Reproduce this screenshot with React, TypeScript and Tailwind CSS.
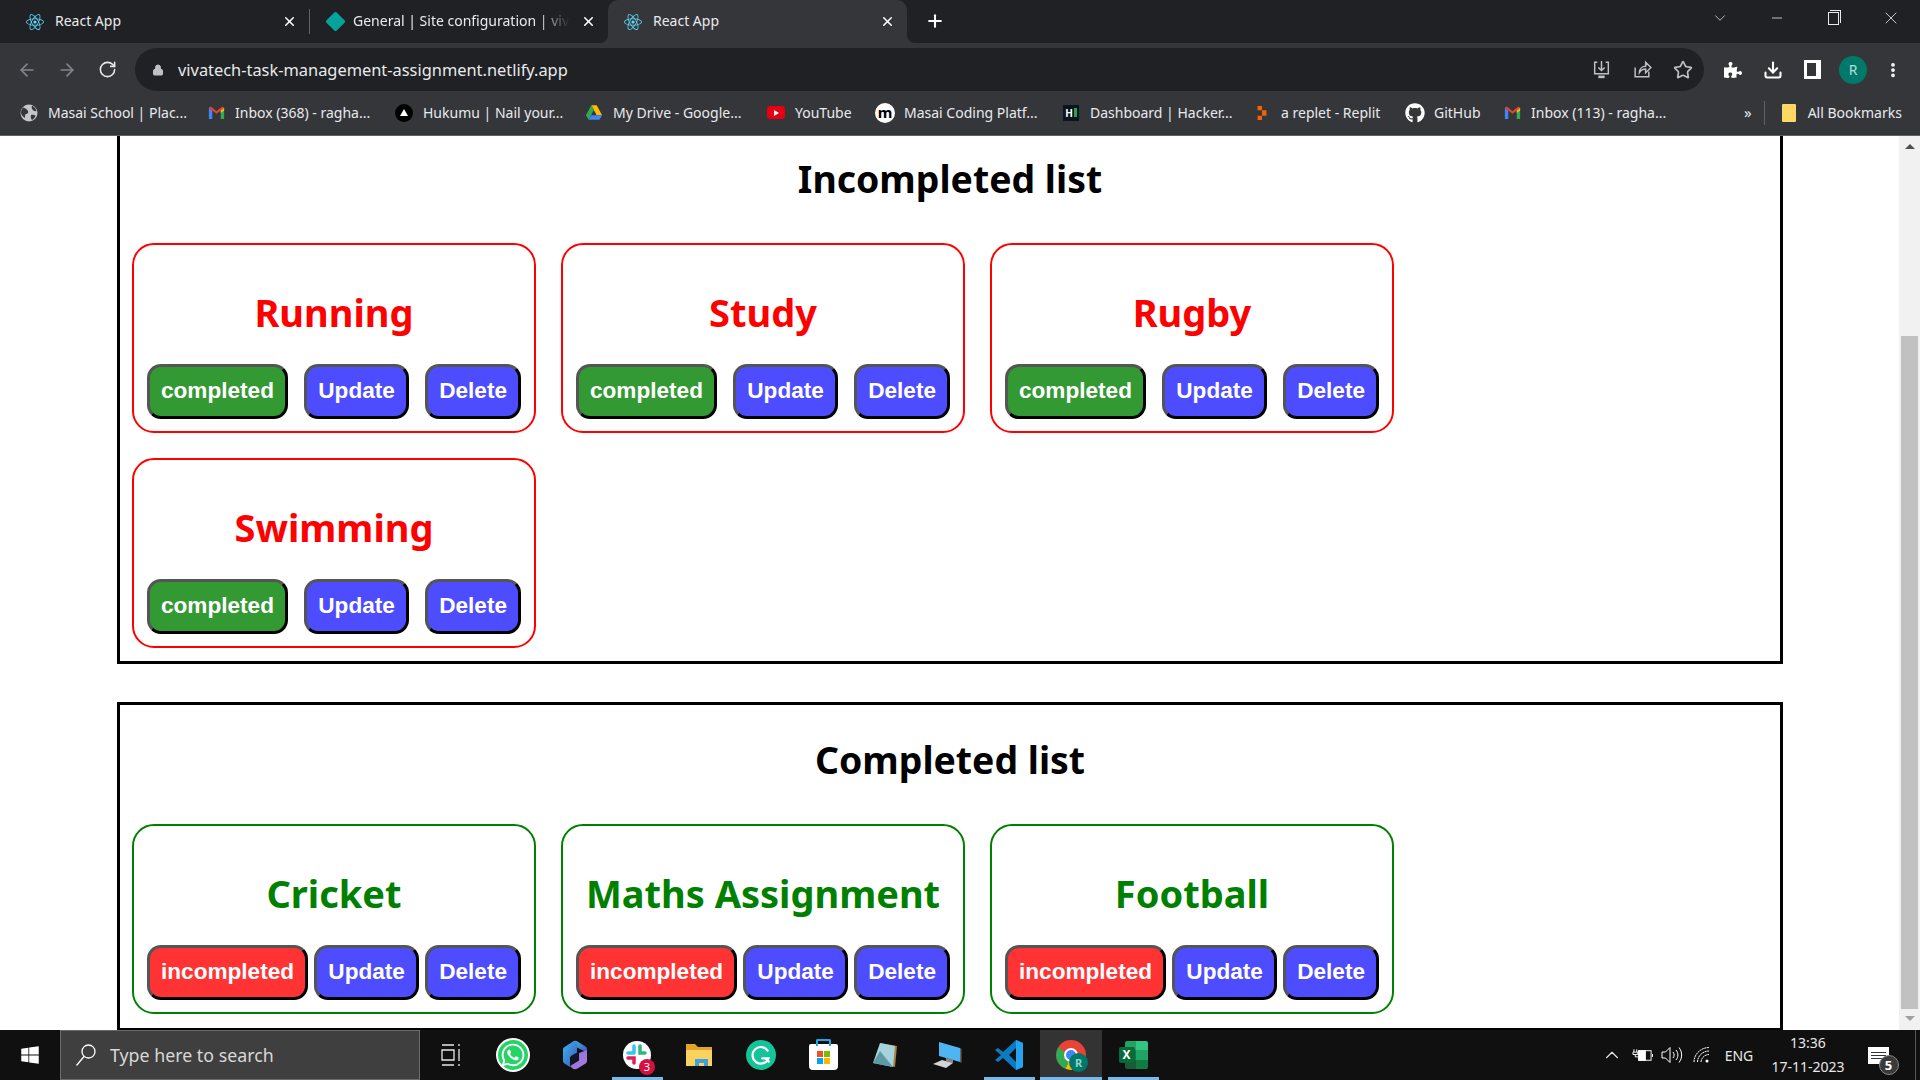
import { ArrowLeft, ArrowRight, ChevronDown, ChevronUp, Download, EllipsisVertical, Lock, Minus, Plus, RotateCw, Star, X } from "lucide-react"
import { FaGithub, FaPuzzlePiece, FaReact, FaWhatsapp, FaWindows } from "react-icons/fa"

const Gmail = () => (
    <svg viewBox="0 0 20 16" className="w-[17px] h-[14px]">
        <path d="M1 15V2l4 3v10z" fill="#4285f4" />
        <path d="M15 15V5l4-3v13z" fill="#34a853" />
        <path d="M1 2c1-1.500 2-1.500 3-1l6 5 6-5c1-.500 2-.500 3 1l-4 3-5 4-5-4z" fill="#ea4335" />
        <path d="M15 5l4-3v3l-4 3z" fill="#fbbc04" />
    </svg>
)

const Drive = () => (
    <svg viewBox="0 0 20 18" className="w-[18px] h-[17px]">
        <path d="M7 1h6l6 11h-6z" fill="#fbbc04" />
        <path d="M7 1L1 12l3 5 6-11z" fill="#34a853" />
        <path d="M4 17h12l3-5H7z" fill="#4285f4" />
    </svg>
)

const SiteGlobe = () => (
    <svg viewBox="0 0 18 18" className="w-[18px] h-[18px]">
        <circle cx="9" cy="9" r="8.500" fill="#c4c6c9" />
        <path d="M3 3.500c2 .500 4 1.500 5 3.500s-1 3-2 3-1 2-1 4c-2-1-4-3-4-5.500 0-2 1-4 2-5zM12 1.500c2 1 4 3 4.500 5.500-1.500.500-3 0-4-1.500s-1-2.500-.500-4zM11 11c1.500-.500 3-.500 4.500.500-.500 2-2 3.500-3.500 4.500-1-1-1.500-3-1-5z" fill="#35363a" />
    </svg>
)

const bookmarks = [
    { icon: <SiteGlobe />, label: "Masai School | Plac...", width: "w-[187px]" },
    { icon: <Gmail />, label: "Inbox (368) - ragha...", width: "w-[188px]" },
    { icon: <span className="w-[18px] h-[18px] rounded-full bg-black flex items-center justify-center"><span className="border-x-[4px] border-x-transparent border-b-[7px] border-b-white" /></span>, label: "Hukumu | Nail your...", width: "w-[190px]" },
    { icon: <Drive />, label: "My Drive - Google...", width: "w-[182px]" },
    { icon: <span className="w-[18px] h-[13px] rounded-[3px] bg-[#e60012] flex items-center justify-center"><span className="border-y-[3px] border-y-transparent border-l-[5px] border-l-white" /></span>, label: "YouTube", width: "w-[109px]" },
    { icon: <span className="w-[20px] h-[20px] rounded-full bg-white text-black text-[15px] leading-[18px] font-bold text-center">m</span>, label: "Masai Coding Platf...", width: "w-[186px]" },
    { icon: <span className="w-[16px] h-[16px] bg-[#0e141e] flex items-center justify-center gap-[1px] text-white text-[10px] leading-none font-bold">H<span className="w-[3px] h-[9px] bg-[#1ba94c]" /></span>, label: "Dashboard | Hacker...", width: "w-[191px]" },
    {
        icon: (
            <svg viewBox="0 0 12 18" className="w-[12px] h-[16px]">
                <path d="M1 1h5v5H1zM6 6h5v6H6zM1 12h5v5H1z" fill="#f26207" />
            </svg>
        ),
        label: "a replet - Replit",
        width: "w-[153px]",
    },
    { icon: <FaGithub size={20} className="text-white" />, label: "GitHub", width: "w-[97px]" },
    { icon: <Gmail />, label: "Inbox (113) - ragha...", width: "w-[180px]" },
]

const taskIcons = [
    { key: "view", underline: "" },
    { key: "whatsapp", underline: "" },
    { key: "copilot", underline: "" },
    { key: "slack", underline: "w-[51px]" },
    { key: "explorer", underline: "" },
    { key: "grammarly", underline: "" },
    { key: "store", underline: "" },
    { key: "notepad", underline: "" },
    { key: "pc", underline: "" },
    { key: "vscode", underline: "w-[51px]" },
    { key: "chrome", underline: "w-[62px]" },
    { key: "excel", underline: "w-[51px]" },
]

function TaskGlyph({ name }: { name: string }) {
    if (name === "view")
        return (
            <svg viewBox="0 0 20 26" className="w-[20px] h-[26px]" fill="none" stroke="#e8e8e8" strokeWidth="1.300">
                <path d="M1 3h12M1 23h12M1 8h12v10H1zM18 2v2M18 7v12M18 22v2" />
            </svg>
        )
    if (name === "whatsapp")
        return (
            <span className="w-[30px] h-[30px] rounded-full bg-[#25d366] flex items-center justify-center ring-2 ring-white">
                <FaWhatsapp size={26} className="text-white" />
            </span>
        )
    if (name === "copilot")
        return (
            <svg viewBox="0 0 26 30" className="w-[26px] h-[30px]">
                <defs>
                    <linearGradient id="copA" x1="0" y1="0" x2="1" y2="1">
                        <stop offset="0" stopColor="#38b6e8" />
                        <stop offset="1" stopColor="#3f56c4" />
                    </linearGradient>
                    <linearGradient id="copB" x1="0" y1="0" x2="1" y2="1">
                        <stop offset="0" stopColor="#7c6fe0" />
                        <stop offset="1" stopColor="#b67cdc" />
                    </linearGradient>
                </defs>
                <path d="M11 1.500c1.500-1 3-1 4.500 0l8 5c1 .700 1.500 1.500 1.500 3v3l-9-4.500-2-1z" fill="url(#copA)" />
                <path d="M2.500 7l8.500-5.500c2-1 4 .500 4 3V13l-7 4v10l-5.500-3.500C1.500 22.800 1 22 1 20.500v-11C1 8.500 1.500 7.600 2.500 7z" fill="url(#copA)" />
                <path d="M25 10v10.500c0 1.500-.500 2.300-1.500 3l-8 5c-2 1.200-4 1-5.500-.500L8 26l9-5.500V13z" fill="url(#copB)" />
                <path d="M9 16l7-4v8l-7 4.500z" fill="#101626" />
            </svg>
        )
    if (name === "slack")
        return (
            <span className="relative w-[28px] h-[28px] rounded-full bg-white">
                <svg viewBox="0 0 28 28" className="w-[28px] h-[28px]" fill="none" strokeWidth="3.500" strokeLinecap="round">
                    <path d="M11 5v7" stroke="#36c5f0" />
                    <path d="M5 12h5" stroke="#36c5f0" />
                    <path d="M17 5v7h5" stroke="#2eb67d" />
                    <path d="M5 17h6v5" stroke="#e01e5a" />
                </svg>
                <span className="absolute -right-[4px] -bottom-[6px] w-[16px] h-[16px] rounded-full bg-[#d4103f] text-white text-[11px] leading-[16px] text-center">3</span>
            </span>
        )
    if (name === "explorer")
        return (
            <svg viewBox="0 0 28 26" className="w-[28px] h-[26px]">
                <path d="M1 2h9l3 3h14v19H1z" fill="#e2a42b" />
                <path d="M1 8h26v16H1z" fill="#f9d25f" />
                <path d="M10 24v-7h13v7h-4v-3h-5v3z" fill="#3f9fe0" />
            </svg>
        )
    if (name === "grammarly")
        return (
            <span className="w-[30px] h-[30px] rounded-full bg-[#15c39a] flex items-center justify-center">
                <svg viewBox="0 0 20 20" className="w-[22px] h-[22px]" fill="none" stroke="white" strokeWidth="2" strokeLinecap="round">
                    <path d="M16 6a7.500 7.500 0 1 0 .800 7H11M14 13l3 3" />
                </svg>
            </span>
        )
    if (name === "store")
        return (
            <span className="relative w-[29px] h-[26px] mt-[4px] rounded-b-[4px] rounded-t-[2px] bg-white grid grid-cols-[6px_6px] grid-rows-[6px_6px] gap-[1px] content-center justify-center">
                <span className="bg-[#f25022]" />
                <span className="bg-[#7fba00]" />
                <span className="bg-[#00a4ef]" />
                <span className="bg-[#ffb900]" />
                <span className="absolute -top-[5px] left-[7px] w-[15px] h-[7px] border-2 border-b-0 border-[#1fa5e8] rounded-t-[2px]" />
            </span>
        )
    if (name === "notepad")
        return (
            <svg viewBox="0 0 28 28" className="w-[28px] h-[28px]">
                <path d="M9 2l17 3-2 21-4-1z" fill="#a9823f" />
                <path d="M9 2l15 3-2 21L2 22z" fill="#a7d3dc" />
                <path d="M2 22l7-12 13 16z" fill="#5f9aa8" />
            </svg>
        )
    if (name === "pc")
        return (
            <svg viewBox="0 0 30 28" className="w-[30px] h-[28px]">
                <path d="M7 1l21 6v14L7 15z" fill="#4fb4f2" />
                <path d="M28 7l1.500 1v14l-1.500-1z" fill="#666666" />
                <path d="M14 17l7 2v3l-7-2z" fill="#8a8a8a" />
                <path d="M1 23l9-4 11 3-7 5z" fill="#d4d4d4" />
            </svg>
        )
    if (name === "vscode")
        return (
            <svg viewBox="0 0 30 32" className="w-[30px] h-[32px]">
                <path d="M22 1l7 3v24l-7 3L9 19l-5 4-3-2 6-5-6-5 3-2 5 4z" fill="#0a7cc4" />
                <path d="M22 1l7 3v24l-7 3z" fill="#24a4ee" />
                <path d="M22 9l-7 7 7 7z" fill="#101010" />
            </svg>
        )
    if (name === "chrome")
        return (
            <span className="relative w-[30px] h-[30px] rounded-full bg-[conic-gradient(#ea4335_0deg_120deg,#fbbc04_120deg_200deg,#34a853_200deg_300deg,#ea4335_300deg)] flex items-center justify-center">
                <span className="w-[14px] h-[14px] rounded-full bg-[#4285f4] border-2 border-white" />
                <span className="absolute -right-[2px] -bottom-[2px] w-[19px] h-[19px] rounded-full bg-[#00796b] text-[#8fd6cb] text-[11px] font-bold leading-[19px] text-center">R</span>
            </span>
        )
    return (
        <span className="relative w-[29px] h-[28px]">
            <span className="absolute right-0 top-0 w-[23px] h-[28px] grid grid-cols-2 grid-rows-3 rounded-[2px] overflow-hidden">
                <span className="bg-[#21a366]" />
                <span className="bg-[#33c481]" />
                <span className="bg-[#107c41]" />
                <span className="bg-[#21a366]" />
                <span className="bg-[#185c37]" />
                <span className="bg-[#107c41]" />
            </span>
            <span className="absolute left-0 top-[6px] w-[16px] h-[16px] bg-[#0b6a38] rounded-[2px] text-white text-[12px] leading-[16px] font-bold text-center">X</span>
        </span>
    )
}

function Tab({ label, active, icon, fade }: { label: string; active?: boolean; icon: React.ReactNode; fade?: boolean }) {
    return (
        <div className={`relative w-[299px] h-[43px] flex items-center pl-[16px] pr-[12px] gap-[11px] ${active ? "bg-[#35363a] rounded-t-[10px]" : ""}`}>
            {active && (
                <>
                    <span className="absolute -left-[8px] bottom-0 w-[8px] h-[8px] bg-[#35363a]"><span className="block w-full h-full bg-[#202124] rounded-br-[8px]" /></span>
                    <span className="absolute -right-[8px] bottom-0 w-[8px] h-[8px] bg-[#35363a]"><span className="block w-full h-full bg-[#202124] rounded-bl-[8px]" /></span>
                </>
            )}
            {icon}
            <span className={`text-[14px] pb-[2px] whitespace-nowrap overflow-hidden text-[#e8eaed] ${fade ? "w-[218px] -ml-[2px] [mask-image:linear-gradient(to_right,black_85%,transparent)]" : ""}`}>{label}</span>
            <X size={15} strokeWidth={2.500} className="ml-auto shrink-0 text-white" />
        </div>
    )
}

function TaskCard({ title, done }: { title: string; done?: boolean }) {
    return (
        <div className={`w-[404px] h-[190px] border-2 rounded-[22px] pt-[40px] px-[13px] ${done ? "border-[#008000]" : "border-[#ff0000]"}`}>
            <h2 className={`h-[54px] mb-[25px] text-center text-[38px] leading-[54px] font-bold ${done ? "text-[#008000]" : "text-[#ff0000]"}`}>{title}</h2>
            <div className="flex justify-between font-['Liberation_Sans',sans-serif]">
                <Btn label={done ? "incompleted" : "completed"} color={done ? "bg-[#ff3333]" : "bg-[#339933]"} />
                <Btn label="Update" color="bg-[#4d4dff]" />
                <Btn label="Delete" color="bg-[#4d4dff]" />
            </div>
        </div>
    )
}

function Btn({ label, color }: { label: string; color: string }) {
    return (
        <button className={`h-[55px] px-[11px] pb-[2px] rounded-[14px] border-[3px] border-t-[#555555] border-l-[#555555] border-r-black border-b-black text-white font-bold text-[22.6px] ${color}`}>
            {label}
        </button>
    )
}

export default function App() {
    return (
        <div className="w-[1920px] h-[1080px] flex flex-col overflow-hidden bg-white font-['Noto_Sans',sans-serif]">
            {/* tab strip */}
            <div className="h-[43px] shrink-0 bg-[#202124] flex pl-[10px] text-[#e8eaed]">
                <Tab label="React App" icon={<FaReact size={18} className="shrink-0 text-[#61dafb]" />} />
                <div className="relative">
                    <span className="absolute left-0 top-[9px] h-[25px] w-px bg-[#5f6368]" />
                    <Tab
                        label="General | Site configuration | vivatech"
                        fade
                        icon={<span className="shrink-0 w-[17px] h-[17px] ml-[2px] rotate-45 scale-[.85] bg-[#05a39c] rounded-[2px]" />}
                    />
                </div>
                <Tab label="React App" active icon={<FaReact size={18} className="shrink-0 text-[#61dafb]" />} />
                <Plus size={20} strokeWidth={2.500} className="ml-[18px] mt-[11px] text-white" />
                <div className="ml-auto h-[36px] flex items-center text-[#e8eaed]">
                    <div className="w-[57px] flex justify-center"><ChevronDown size={18} strokeWidth={1} /></div>
                    <div className="w-[58px] flex justify-center"><Minus size={16} strokeWidth={1.200} /></div>
                    <div className="w-[57px] pr-[2px] flex justify-center">
                        <span className="relative w-[11px] h-[13px] border border-[#e8eaed] after:absolute after:left-[1px] after:-top-[3px] after:w-[11px] after:h-[13px] after:border-t after:border-r after:border-[#e8eaed]" />
                    </div>
                    <div className="w-[57px] pr-[1px] flex justify-center"><X size={20} strokeWidth={1} /></div>
                </div>
            </div>

            {/* toolbar */}
            <div className="h-[52px] shrink-0 bg-[#35363a] flex items-start pt-[5px] text-[#e8eaed]">
                <div className="w-[135px] h-[43px] flex items-center pl-[17px] gap-[20px]">
                    <ArrowLeft size={20} className="text-[#80868b]" />
                    <ArrowRight size={20} className="text-[#80868b]" />
                    <RotateCw size={19} className="text-[#e8eaed] ml-[1px]" />
                </div>
                <div className="w-[1569px] h-[43px] rounded-full bg-[#202124] flex items-center pl-[17px] pr-[11px]">
                    <Lock size={12} className="text-[#bdc1c6] fill-[#bdc1c6]" />
                    <span className="ml-[14px] pt-[1px] text-[16.4px] text-[#e8eaed]">vivatech-task-management-assignment.netlify.app</span>
                    <div className="ml-auto flex items-center gap-[20px] text-[#bdc1c6]">
                        <svg viewBox="0 0 20 20" className="w-[21px] h-[21px]" fill="none" stroke="currentColor" strokeWidth="1.400">
                            <path d="M6 3H3.500v11h13V3H14M10 2v9M7 8l3 3 3-3" />
                            <path d="M7 17h6" strokeWidth="2.500" />
                        </svg>
                        <svg viewBox="0 0 20 20" className="w-[21px] h-[21px]" fill="none" stroke="currentColor" strokeWidth="1.400">
                            <path d="M3 8v9h13v-5" />
                            <path d="M7 13c0-4 3-6 6-6V3l5 5-5 5V9.500c-2.500 0-4.500 1-6 3.500z" />
                        </svg>
                        <Star size={20} />
                    </div>
                </div>
                <div className="flex-1 h-[43px] flex items-center pl-[20px] gap-[21px]">
                    <FaPuzzlePiece size={18} className="text-white" />
                    <Download size={20} strokeWidth={2.500} className="text-white" />
                    <span className="w-[17px] h-[19px] border-[3px] border-r-[5px] border-white" />
                    <span className="w-[28px] h-[28px] -ml-[3px] rounded-full bg-[#00796b] text-[#b2dfdb] text-[14px] leading-[28px] text-center">R</span>
                    <EllipsisVertical size={18} strokeWidth={3} className="text-white -ml-[4px]" />
                </div>
            </div>

            {/* bookmarks */}
            <div className="h-[41px] shrink-0 bg-[#35363a] border-b border-[#5f6368] flex items-center pb-[5px] pl-[19px] text-[#e8eaed] text-[14px]">
                {bookmarks.map((b) => (
                    <div key={b.label + b.width} className={`${b.width} shrink-0 flex items-center`}>
                        <span className="w-[20px] shrink-0 flex justify-center">{b.icon}</span>
                        <span className="ml-[9px] whitespace-nowrap">{b.label}</span>
                    </div>
                ))}
                <span className="ml-[62px] text-[15px]">»</span>
                <span className="ml-[12px] w-px h-[24px] bg-[#5f6368]" />
                <span className="ml-[17px] w-[14px] h-[18px] bg-[#fdd663] rounded-[1px]" />
                <span className="ml-[12px] whitespace-nowrap">All Bookmarks</span>
            </div>

            {/* page */}
            <div className="flex-1 min-h-0 flex overflow-hidden">
                <main className="flex-1 pl-[117px]">
                    <section className="w-[1666px] border-[3px] border-t-0 border-black pt-[13px] pb-[13px] pl-[12px]">
                        <h1 className="h-[60px] mb-[34px] -ml-[12px] text-center text-[37.4px] leading-[60px] font-bold text-black">Incompleted list</h1>
                        <div className="grid grid-cols-[repeat(3,404px)] gap-x-[25px] gap-y-[25px]">
                            <TaskCard title="Running" />
                            <TaskCard title="Study" />
                            <TaskCard title="Rugby" />
                            <TaskCard title="Swimming" />
                        </div>
                    </section>
                    <section className="w-[1666px] mt-[38px] border-[3px] border-black pt-[25px] pb-[14px] pl-[12px]">
                        <h1 className="h-[60px] mb-[34px] -ml-[12px] text-center text-[37.4px] leading-[60px] font-bold text-black">Completed list</h1>
                        <div className="grid grid-cols-[repeat(3,404px)] gap-x-[25px]">
                            <TaskCard title="Cricket" done />
                            <TaskCard title="Maths Assignment" done />
                            <TaskCard title="Football" done />
                        </div>
                    </section>
                </main>
                <div className="w-[21px] shrink-0 bg-[#f1f1f1] flex flex-col items-center">
                    <div className="h-[200px] w-full pt-[8px] flex justify-center">
                        <span className="h-0 border-x-[5px] border-x-transparent border-b-[5px] border-b-[#505050]" />
                    </div>
                    <div className="w-[17px] h-[673px] bg-[#c1c1c1]" />
                    <div className="flex-1 w-full pt-[7px] flex justify-center">
                        <span className="h-0 border-x-[5px] border-x-transparent border-t-[5px] border-t-[#a0a0a0]" />
                    </div>
                </div>
            </div>

            {/* taskbar */}
            <div className="h-[50px] shrink-0 bg-[#101010] flex items-stretch text-[#e8e8e8]">
                <div className="w-[60px] flex items-center justify-center">
                    <FaWindows size={20} className="text-white" />
                </div>
                <div className="w-[360px] bg-[#3f3f3f] border border-[#6b6b6b] flex items-center pl-[14px] gap-[13px]">
                    <svg viewBox="0 0 22 24" className="w-[22px] h-[24px]" fill="none" stroke="white" strokeWidth="1.300">
                        <circle cx="13.500" cy="8.500" r="6.500" />
                        <path d="M9 13.500L1.500 22.500" />
                    </svg>
                    <span className="text-[17.8px] text-[#d8d8d8]">Type here to search</span>
                </div>
                {taskIcons.map((t) => (
                    <div key={t.key} className={`relative w-[62px] flex items-center justify-center ${t.key === "chrome" ? "bg-[#333333]" : ""}`}>
                        <TaskGlyph name={t.key} />
                        {t.underline && <span className={`absolute bottom-0 h-[3px] bg-[#76b9ed] ${t.underline}`} />}
                    </div>
                ))}
                <div className="ml-auto flex items-center">
                    <div className="w-[30px] flex justify-center"><ChevronUp size={22} strokeWidth={1.200} /></div>
                    <div className="w-[30px] flex justify-center items-center">
                        <svg viewBox="0 0 22 14" className="w-[21px] h-[14px]" fill="none" stroke="white" strokeWidth="1">
                            <path d="M2 1v3M5 1v3M1 4h5v2.500H1zM3.500 6.500V9H7" />
                            <rect x="7" y="2.500" width="13" height="10" />
                            <rect x="7" y="2.500" width="7" height="10" fill="white" />
                            <path d="M21.500 6v3" />
                        </svg>
                    </div>
                    <div className="w-[30px] flex justify-center">
                        <svg viewBox="0 0 22 18" className="w-[22px] h-[18px]" fill="none" stroke="white" strokeWidth="1">
                            <path d="M1 6h3.500L9 1.500v15L4.500 12H1z" />
                            <path d="M12 6c1.500 2 1.500 4 0 6M15 4c2.500 3 2.500 7 0 10M18 1.500c3.500 4.500 3.500 10.500 0 15" />
                        </svg>
                    </div>
                    <div className="w-[31px] flex justify-center">
                        <svg viewBox="0 0 20 18" className="w-[20px] h-[18px]" fill="none" stroke="white" strokeWidth="1">
                            <path d="M1 16C1 8 8 1.500 16 1.500M4.500 16C4.500 10 10 5 16 5M8 16c0-3.500 3.500-7.500 8-7.500" strokeDasharray="2 .6" />
                            <circle cx="14" cy="15" r="1.500" fill="white" stroke="none" />
                        </svg>
                    </div>
                    <div className="w-[42px] text-center text-[14px]">ENG</div>
                    <div className="w-[96px] text-center text-[14px] leading-[24px]">
                        <div>13:36</div>
                        <div>17-11-2023</div>
                    </div>
                    <div className="w-[44px] flex justify-center">
                        <span className="relative w-[21px] h-[17px] bg-white flex flex-col justify-center gap-[2px] px-[3px]">
                            <span className="h-px bg-[#333]" />
                            <span className="h-px bg-[#333]" />
                            <span className="h-px bg-[#333]" />
                            <span className="absolute -right-[10px] -bottom-[11px] w-[20px] h-[20px] rounded-full bg-[#3a3a3a] border border-[#888] text-[13px] leading-[18px] font-bold text-center text-white">5</span>
                        </span>
                    </div>
                    <div className="w-[20px] h-full flex justify-end pr-[4px]"><span className="w-px h-full bg-[#555]" /></div>
                </div>
            </div>
        </div>
    )
}
